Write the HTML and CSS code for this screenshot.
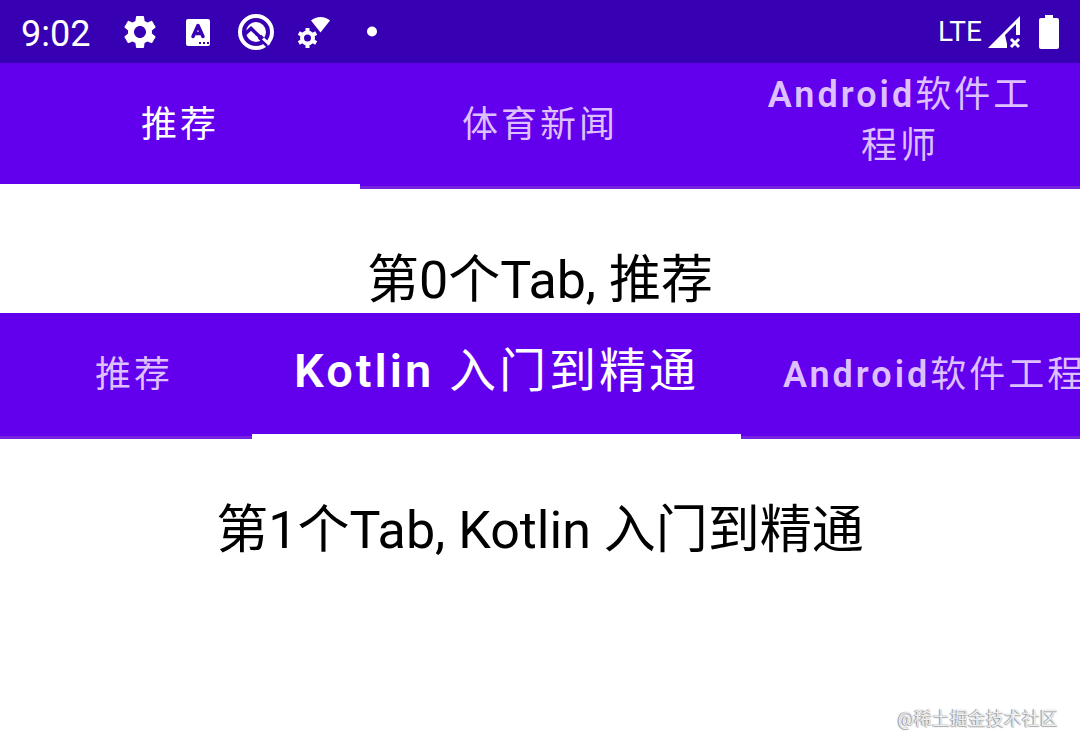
FILE: index.html
```html
<!DOCTYPE html>
<html lang="zh-CN">
<head>
    <meta charset="UTF-8">
    <meta name="viewport" content="width=device-width, initial-scale=1.0">
    <title>TabRow</title>
    <link rel="stylesheet" href="styles.css">
</head>
<body>
    <header class="status-bar">
        <span class="clock">9:02</span>
        <!-- settings -->
        <svg class="status-icon" viewBox="1.2 1.2 21.6 21.6">
            <path fill="#fff" d="M19.14 12.94c.04-.3.06-.61.06-.94 0-.32-.02-.64-.07-.94l2.03-1.58c.18-.14.23-.41.12-.61l-1.92-3.32c-.12-.22-.37-.29-.59-.22l-2.39.96c-.5-.38-1.03-.7-1.62-.94l-.36-2.54c-.04-.24-.24-.41-.48-.41h-3.84c-.24 0-.43.17-.47.41l-.36 2.54c-.59.24-1.13.57-1.62.94l-2.39-.96c-.22-.08-.47 0-.59.22L2.74 8.87c-.12.21-.08.47.12.61l2.03 1.58c-.05.3-.09.63-.09.94s.02.64.07.94l-2.03 1.58c-.18.14-.23.41-.12.61l1.92 3.32c.12.22.37.29.59.22l2.39-.96c.5.38 1.03.7 1.62.94l.36 2.54c.05.24.24.41.48.41h3.84c.24 0 .44-.17.47-.41l.36-2.54c.59-.24 1.13-.56 1.62-.94l2.39.96c.22.08.47 0 .59-.22l1.92-3.32c.12-.22.07-.47-.12-.61l-2.01-1.58zM12 15.6c-1.98 0-3.6-1.62-3.6-3.6s1.62-3.6 3.6-3.6 3.6 1.62 3.6 3.6-1.62 3.6-3.6 3.6z"/>
        </svg>
        <!-- keyboard -->
        <svg class="status-icon" viewBox="0 0 36 36">
            <rect x="6" y="5" width="24" height="27" rx="2" fill="#fff"/>
            <path d="M13 22.500l5-11 5 11M15 19.500h6" fill="none" stroke="#3700b3" stroke-width="3.500" stroke-linejoin="round" stroke-linecap="round"/>
            <path d="M19 29h2M23 29h2M27 29h2" stroke="#3700b3" stroke-width="2"/>
        </svg>
        <!-- android q -->
        <svg class="status-icon" viewBox="0 0 36 36">
            <circle cx="18" cy="18" r="16" fill="none" stroke="#fff" stroke-width="4"/>
            <circle cx="18" cy="18" r="10" fill="#fff"/>
            <path d="M7 20l6-5.500 17 16" fill="none" stroke="#3700b3" stroke-width="3.500"/>
            <path d="M21.500 22.500l7 7" stroke="#3700b3" stroke-width="5"/>
            <path d="M25 24.500l6.500 6" stroke="#fff" stroke-width="3"/>
            <path d="M23 26.500l8 8" stroke="#3700b3" stroke-width="2"/>
        </svg>
        <!-- wifi settings -->
        <svg class="status-icon" viewBox="0 0 36 36">
            <path fill="#fff" d="M15 6.500c5-4.700 14-4.700 19 0L24.500 18.500z"/>
            <circle cx="11.500" cy="24" r="10.500" fill="#3700b3"/>
            <g fill="none" stroke="#fff">
                <circle cx="11.500" cy="24" r="5.500" stroke-width="4"/>
                <path d="M11.500 14v4M11.500 30v4M2.800 19l3.500 2M16.700 27l3.500 2M2.800 29l3.500-2M16.700 21l3.500-2" stroke-width="4"/>
            </g>
        </svg>
        <svg class="status-icon" viewBox="0 0 36 36">
            <circle cx="18" cy="17.500" r="5" fill="#fff"/>
        </svg>
        <span class="network">LTE</span>
        <svg class="signal" viewBox="0 0 34 34">
            <path fill="#fff" d="M1 33L33 1v19h-4V9L18 20l2 9v4z"/>
            <path d="M24 24l8 8M32 24l-8 8" stroke="#fff" stroke-width="3"/>
        </svg>
        <svg class="battery" viewBox="0 0 20 34">
            <path fill="#fff" d="M6 0h8v3h4a2 2 0 0 1 2 2v27a2 2 0 0 1-2 2H2a2 2 0 0 1-2-2V5a2 2 0 0 1 2-2h4z"/>
        </svg>
    </header>

    <main>
        <section>
            <div class="tab-row" role="tablist">
                <button class="tab selected" role="tab" aria-selected="true">推荐</button>
                <button class="tab" role="tab" aria-selected="false">体育新闻</button>
                <button class="tab two-lines" role="tab" aria-selected="false"><b>Android</b>软件工程师</button>
            </div>
            <p class="tab-content">第0个Tab, 推荐</p>
        </section>

        <section>
            <div class="tab-row scrollable" role="tablist">
                <button class="tab" role="tab" aria-selected="false">推荐</button>
                <button class="tab selected large" role="tab" aria-selected="true"><b>Kotlin</b> 入门到精通</button>
                <button class="tab" role="tab" aria-selected="false"><b>Android</b>软件工程师</button>
            </div>
            <p class="tab-content">第1个Tab, Kotlin 入门到精通</p>
        </section>
    </main>

    <footer class="watermark">@稀土掘金技术社区</footer>
</body>
</html>
```
FILE: styles.css
```css
* {
    box-sizing: border-box;
}

body {
    display: flex;
    flex-direction: column;
    min-height: 100vh;
    margin: 0;
    background: #fff;
    color: #000;
    font-family: Roboto, "Noto Sans CJK SC", sans-serif;
}

/* Status bar */
.status-bar {
    display: flex;
    align-items: center;
    height: 63px;
    padding: 0 21px;
    background: #3700b3;
    color: #fff;
}

.clock {
    margin-right: 10px;
    padding-top: 4px;
    font-size: 36px;
    line-height: 40px;
}

.status-icon {
    width: 36px;
    height: 36px;
    margin-left: 22px;
}

.network {
    margin-left: auto;
    font-size: 28px;
}

.signal {
    width: 34px;
    height: 34px;
    margin: 0 18px 0 5px;
}

.battery {
    width: 20px;
    height: 34px;
}

/* Tabs */
.tab-row {
    display: flex;
    overflow: hidden;
    background: #6200ee;
    box-shadow: inset 0 -3px #7722de;
}

.tab {
    flex: 1 1 0;
    height: 126px;
    padding: 0 42px 2px;
    border: 0;
    background: none;
    color: #debfff;
    font-family: inherit;
    font-size: 36px;
    line-height: 51px;
    letter-spacing: 3px;
    cursor: pointer;
}

.tab b {
    font-weight: 600;
}

.tab.selected {
    color: #fff;
    box-shadow: inset 0 -5px #fff;
}

.tab.two-lines {
    padding-bottom: 10px;
}

.scrollable {
    padding-left: 16px;
}

.scrollable .tab {
    flex: none;
    min-width: 236px;
    white-space: nowrap;
}

.scrollable .large {
    padding-bottom: 12px;
    font-size: 47px;
}

.tab-content {
    margin: 0;
    padding: 62px 16px 2px;
    font-size: 52px;
    line-height: 60px;
    text-align: center;
}

.watermark {
    margin-top: auto;
    padding: 0 22px 19px;
    color: #eee;
    font-size: 18px;
    line-height: 24px;
    text-align: right;
    text-shadow: -1px 0 1px #888, 0 1px 1px #aaa;
}
```
